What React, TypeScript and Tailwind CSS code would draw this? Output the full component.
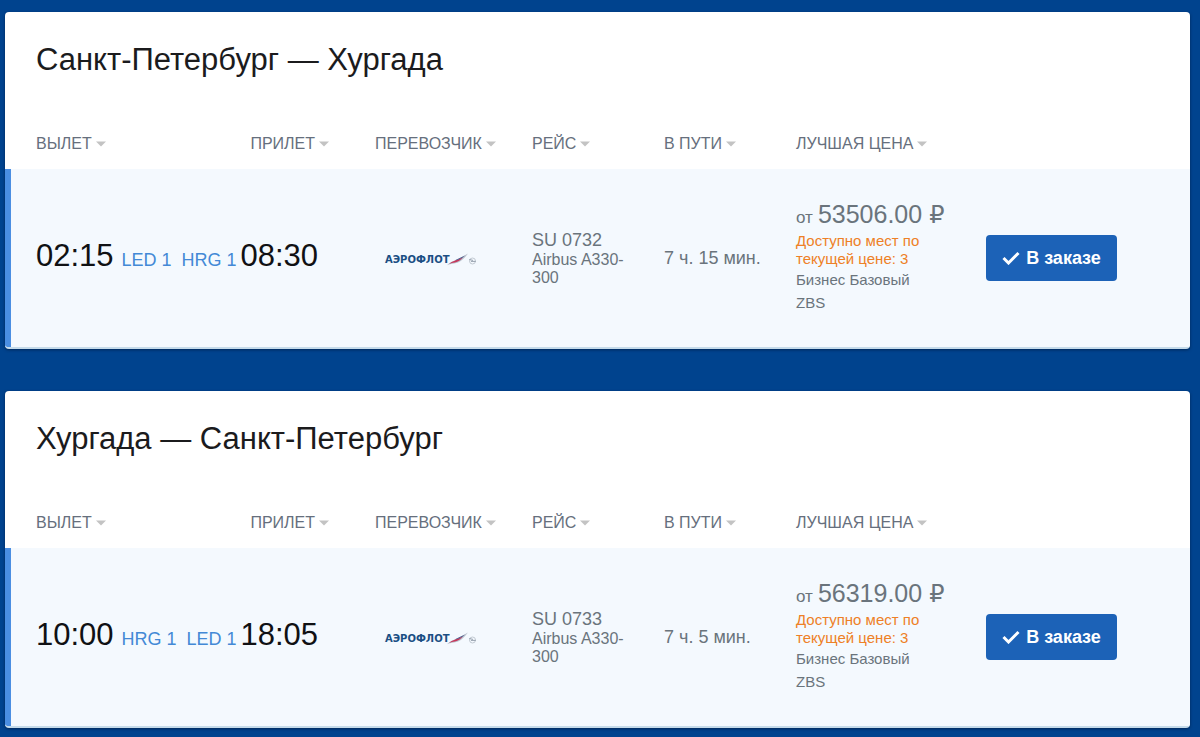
type Flight = {
  id: string;
  title: string;
  departTime: string;
  departAirport: string;
  arriveTime: string;
  arriveAirport: string;
  flight: string;
  aircraft: string;
  duration: string;
  price: string;
};

const flights: Flight[] = [
  {
    id: "out",
    title: "Санкт-Петербург — Хургада",
    departTime: "02:15",
    departAirport: "LED 1",
    arriveTime: "08:30",
    arriveAirport: "HRG 1",
    flight: "SU 0732",
    aircraft: "Airbus A330-300",
    duration: "7 ч. 15 мин.",
    price: "53506.00",
  },
  {
    id: "back",
    title: "Хургада — Санкт-Петербург",
    departTime: "10:00",
    departAirport: "HRG 1",
    arriveTime: "18:05",
    arriveAirport: "LED 1",
    flight: "SU 0733",
    aircraft: "Airbus A330-300",
    duration: "7 ч. 5 мин.",
    price: "56319.00",
  },
];

function SortButton({ label }: { label: string }) {
  return (
    <button type="button" className="inline-flex items-center gap-1 whitespace-nowrap">
      {label}
      <svg viewBox="0 0 10 6" className="h-[6px] w-[10px]" aria-hidden="true">
        <path d="M0 0.5h10L5 5.5z" fill="#c3c3c3" />
      </svg>
    </button>
  );
}

function AeroflotLogo() {
  return (
    <span className="flex items-center pl-[10px] pt-[3px]">
      <span className="font-['DejaVu_Sans'] text-[10px] leading-[12px] font-bold text-[#1b4f84]">АЭРОФЛОТ</span>
      <svg viewBox="0 0 30 14" className="-ml-[2px] h-[14px] w-[30px] shrink-0" aria-hidden="true">
        <path d="M0 12.2C3 9 6 8.200 10 6.800L21 0.500C18 4.500 15 7.600 11 9.600C7 11.200 4 10.600 0 12.200Z" fill="#b9c0cb" />
        <path d="M2 11C5 8.600 8 7.800 11 6.600L16 4.200C13.500 7 11 8.800 8 9.400C5.500 9.700 4 10 2 11Z" fill="#c8365a" />
        <path d="M9 6.800L18 2.400L15.500 4.800C13 6 11 7 8 7.600Z" fill="#4d5f8d" />
        <circle cx="25.500" cy="8" r="3" fill="none" stroke="#b4bcc6" strokeWidth="0.800" />
        <path d="M22.300 6.500L26 7.400M24 8.400H28.700" stroke="#8c97a5" strokeWidth="0.900" />
      </svg>
    </span>
  );
}

function FlightCard({ data }: { data: Flight }) {
  return (
    <section className="overflow-hidden rounded border-b-2 border-[#c5dbea] bg-white shadow-[0_1px_3px_rgba(0,20,50,0.6)]">
      <h2 className="px-[31px] pt-[28px] pb-[56px] text-[31px] leading-[40px] text-[#1b1b1d]">{data.title}</h2>
      <table className="w-full table-fixed border-separate border-spacing-0 text-left text-[#6a747c]">
        <colgroup>
          <col className="w-[173px]" />
          <col className="w-[197px]" />
          <col className="w-[157px]" />
          <col className="w-[132px]" />
          <col className="w-[132px]" />
          <col className="w-[190px]" />
          <col />
        </colgroup>
        <thead>
          <tr className="h-[33px] align-top text-[16px] leading-[16px] text-[#666f7d]">
            <th className="pl-[31px] font-normal"><SortButton label="ВЫЛЕТ" /></th>
            <th className="pr-[46px] text-right font-normal"><SortButton label="ПРИЛЕТ" /></th>
            <th className="font-normal"><SortButton label="ПЕРЕВОЗЧИК" /></th>
            <th className="font-normal"><SortButton label="РЕЙС" /></th>
            <th className="font-normal"><SortButton label="В ПУТИ" /></th>
            <th className="font-normal"><SortButton label="ЛУЧШАЯ ЦЕНА" /></th>
            <td />
          </tr>
        </thead>
        <tbody>
          <tr className="h-[178px] bg-[#f4f9fe] align-middle">
            <td className="border-l-[6px] border-[#4a8ee2] pl-[25px]">
              <div className="flex items-baseline gap-2 pb-1 whitespace-nowrap">
                <span className="text-[31px] leading-[40px] text-[#101114]">{data.departTime}</span>
                <a href="#" className="text-[18px] text-[#4389d6]">{data.departAirport}</a>
              </div>
            </td>
            <td className="pr-[57px]">
              <div className="flex items-baseline justify-end gap-1 pb-1 whitespace-nowrap">
                <a href="#" className="text-[18px] text-[#4389d6]">{data.arriveAirport}</a>
                <span className="text-[31px] leading-[40px] text-[#101114]">{data.arriveTime}</span>
              </div>
            </td>
            <td><AeroflotLogo /></td>
            <td>
              <div className="text-[18px] leading-[20px]">{data.flight}</div>
              <div className="w-[96px] pt-px text-[16px] leading-[18px]">{data.aircraft}</div>
            </td>
            <td className="text-[18px] leading-[20px]">{data.duration}</td>
            <td className="pb-[3px]">
              <div className="flex items-baseline text-[25px] leading-[28px] whitespace-nowrap">
                <span className="pr-[5px] text-[17px]">от</span>
                <span className="pr-[7px]">{data.price}</span>
                <span className="font-['DejaVu_Sans'] text-[24px] leading-[28px]">₽</span>
              </div>
              <div className="w-[140px] text-[15px] leading-[18px] text-[#ee8026]">Доступно мест по текущей цене: 3</div>
              <div className="w-[140px] text-[15px] leading-[23px]">
                Бизнес Базовый
                <br />
                ZBS
              </div>
            </td>
            <td>
              <button
                type="button"
                className="flex h-[46px] w-[131px] items-center justify-center gap-[6px] rounded bg-[#1c62b7] text-[18px] font-bold text-white"
              >
                <svg viewBox="0 0 18 14" className="h-[14px] w-[18px]" aria-hidden="true">
                  <path d="M1.500 7L6.500 12L16.500 2" fill="none" stroke="#fff" strokeWidth="3" />
                </svg>
                В заказе
              </button>
            </td>
          </tr>
        </tbody>
      </table>
    </section>
  );
}

export default function App() {
  return (
    <main className="flex min-h-screen flex-col gap-[42px] bg-[#00438e] pt-[12px] pr-[10px] pb-[8px] pl-[5px] font-['Liberation_Sans',Arial,sans-serif]">
      {flights.map((flight) => (
        <FlightCard key={flight.id} data={flight} />
      ))}
    </main>
  );
}
